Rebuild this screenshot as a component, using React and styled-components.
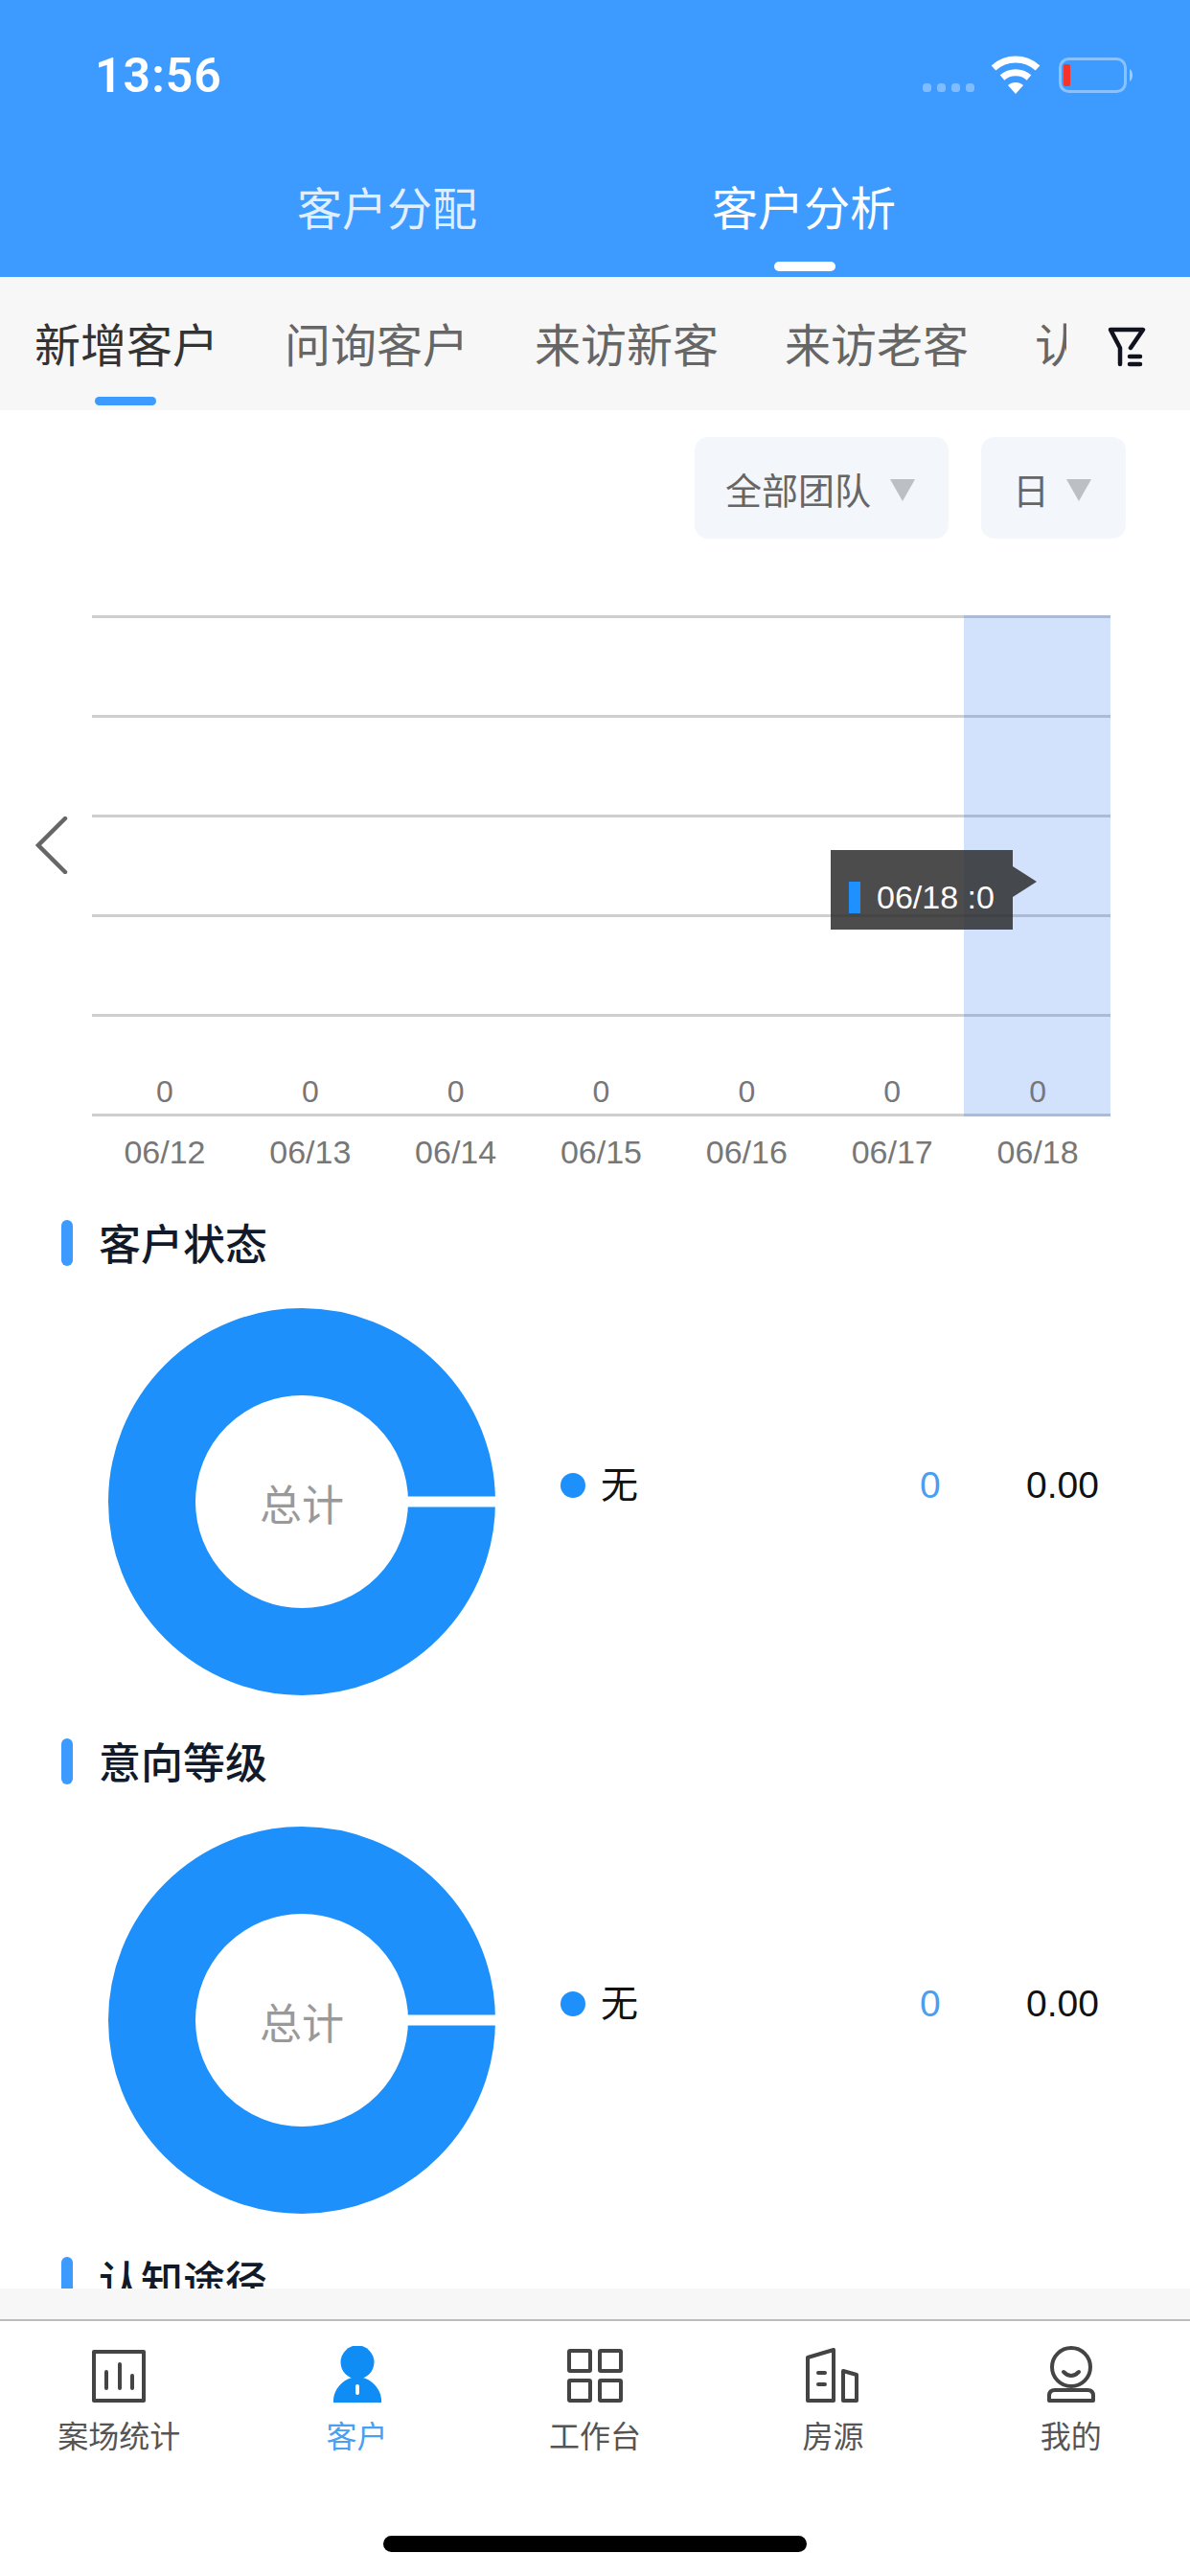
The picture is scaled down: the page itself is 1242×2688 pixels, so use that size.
import React from 'react';
import styled, { createGlobalStyle } from 'styled-components';

const days = ['06/12', '06/13', '06/14', '06/15', '06/16', '06/17', '06/18'];
const subTabs = ['新增客户', '问询客户', '来访新客', '来访老客', '认知客户'];

const GlobalStyle = createGlobalStyle`
  html, body {
    margin: 0;
    padding: 0;
    background: #fff;
  }
  body {
    font-family: "Liberation Sans", "Noto Sans CJK SC", sans-serif;
  }
`;

const Phone = styled.div`
  width: 1242px;
  height: 2688px;
  display: flex;
  flex-direction: column;
  overflow: hidden;
  background: #fff;
`;

const Header = styled.header`
  height: 289px;
  flex: none;
  background: #3d9aff;
  display: flex;
  flex-direction: column;
  color: #fff;
`;

const StatusBar = styled.div`
  height: 189px;
  flex: none;
  box-sizing: border-box;
  padding: 50px 59px 0 99px;
  display: flex;
  align-items: flex-start;
  justify-content: space-between;
`;

const Clock = styled.div`
  font-family: Roboto, "Liberation Sans", sans-serif;
  font-size: 50px;
  line-height: 58px;
  font-weight: 600;
  letter-spacing: 1px;
`;

const StatusIcons = styled.div`
  display: flex;
  align-items: flex-start;
  margin-top: 8px;
`;

const SignalSvg = styled.svg`
  margin-top: 23px;
`;

const BatterySvg = styled.svg`
  margin: 2px 0 0 19px;
`;

const TopTabs = styled.nav`
  display: flex;
  padding-left: 310px;
  gap: 241px;
`;

const TopTab = styled.div`
  position: relative;
  width: 192px;
  height: 100px;
  font-size: ${p => (p.$active ? '48px' : '47px')};
  line-height: 60px;
  white-space: nowrap;
  color: ${p => (p.$active ? '#fff' : 'rgba(255,255,255,.85)')};
  ${p => p.$active && `
    &::after {
      content: '';
      position: absolute;
      left: 65px;
      bottom: 6px;
      width: 64px;
      height: 10px;
      border-radius: 5px;
      background: #fff;
    }
  `}
`;

const SubBar = styled.div`
  height: 139px;
  flex: none;
  background: #f7f7f7;
  display: flex;
  align-items: flex-start;
`;

const SubTabs = styled.div`
  width: 1113px;
  flex: none;
  overflow: hidden;
  display: flex;
  gap: 69px;
  padding-left: 36px;
  box-sizing: border-box;
`;

const SubTab = styled.div`
  position: relative;
  flex: none;
  width: 192px;
  height: 139px;
  box-sizing: border-box;
  padding-top: 43px;
  font-size: 48px;
  line-height: 60px;
  white-space: nowrap;
  color: ${p => (p.$active ? '#333' : '#666')};
  ${p => p.$active && `
    &::after {
      content: '';
      position: absolute;
      left: 63px;
      top: 125px;
      width: 64px;
      height: 9px;
      border-radius: 5px;
      background: #3d9aff;
    }
  `}
`;

const FilterButton = styled.div`
  margin: 52px 0 0 43px;
  line-height: 0;
`;

const Content = styled.main`
  flex: 1;
  min-height: 0;
  overflow: hidden;
  background: #fff;
`;

const Filters = styled.div`
  display: flex;
  justify-content: flex-end;
  gap: 34px;
  padding: 28px 67px 0 0;
`;

const Select = styled.div`
  height: 106px;
  box-sizing: border-box;
  padding: 0 ${p => (p.$short ? '36px' : '35px')} 0 ${p => (p.$short ? '33px' : '32px')};
  display: flex;
  align-items: center;
  gap: ${p => (p.$short ? '18px' : '20px')};
  border-radius: 14px;
  background: #f3f6fb;
  color: #666;
  font-size: 38px;
`;

const Caret = styled.span`
  width: 0;
  height: 0;
  border-left: 13px solid transparent;
  border-right: 13px solid transparent;
  border-top: 23px solid #bcbfc4;
  margin-top: 4px;
`;

const ChartRow = styled.div`
  display: flex;
  align-items: flex-start;
  padding: 80px 83px 7px 37px;
`;

const PrevButton = styled.div`
  width: 59px;
  flex: none;
  margin-top: 210px;
`;

const Chart = styled.div`
  flex: 1;
`;

const Plot = styled.div`
  position: relative;
  height: 523px;
  display: flex;
  flex-direction: column;
  justify-content: space-between;
`;

const GridLine = styled.div`
  height: 3px;
  background: #cfcfcf;
`;

const Highlight = styled.div`
  position: absolute;
  top: 0;
  bottom: 0;
  right: 0;
  width: 153px;
  background: rgba(30, 110, 240, 0.2);
`;

const ValueRow = styled.div`
  position: absolute;
  left: 0;
  right: 0;
  bottom: 8px;
  display: grid;
  grid-template-columns: repeat(7, 1fr);
  text-align: center;
  font-size: 32px;
  line-height: 36px;
  color: #777;
`;

const AxisRow = styled.div`
  display: grid;
  grid-template-columns: repeat(7, 1fr);
  text-align: center;
  font-size: 34px;
  line-height: 38px;
  color: #777;
  padding-top: 18px;
`;

const Tooltip = styled.div`
  position: absolute;
  left: 771px;
  top: 245px;
  width: 190px;
  height: 83px;
  box-sizing: border-box;
  padding-left: 19px;
  display: flex;
  align-items: center;
  gap: 17px;
  background: rgba(45, 45, 45, 0.85);
  color: #fff;
  font-size: 34px;
  white-space: nowrap;
  &::after {
    content: '';
    position: absolute;
    left: 100%;
    top: 17px;
    border-left: 25px solid rgba(45, 45, 45, 0.85);
    border-top: 16px solid transparent;
    border-bottom: 16px solid transparent;
  }
`;

const TooltipMark = styled.span`
  width: 12px;
  height: 33px;
  margin-top: 16px;
  flex: none;
  background: #1e90ff;
`;

const TooltipText = styled.span`
  margin-top: 16px;
`;

const Section = styled.section`
  margin-top: 45px;
  padding-left: 64px;
`;

const SectionTitle = styled.h2`
  margin: 0;
  display: flex;
  align-items: flex-start;
  gap: 27px;
  height: 48px;
  font-size: 44px;
  line-height: 54px;
  font-weight: 500;
  color: #111a2a;
  white-space: nowrap;
  &::before {
    content: '';
    width: 12px;
    height: 48px;
    border-radius: 6px;
    background: #3d9aff;
  }
`;

const PieRow = styled.div`
  display: flex;
  align-items: center;
  padding: 44px 94px 0 49px;
`;

const Donut = styled.div`
  position: relative;
  width: 404px;
  height: 404px;
  flex: none;
`;

const DonutLabel = styled.div`
  position: absolute;
  inset: 0;
  display: flex;
  align-items: center;
  justify-content: center;
  padding-top: 2px;
  box-sizing: border-box;
  font-size: 44px;
  color: #999;
`;

const Legend = styled.div`
  flex: 1;
  margin: -34px 0 0 68px;
  display: flex;
  align-items: center;
  font-size: 39px;
  line-height: 44px;
`;

const Dot = styled.span`
  width: 26px;
  height: 26px;
  border-radius: 50%;
  background: #1e90fb;
  margin-right: 16px;
`;

const LegendName = styled.span`
  color: #111;
  width: 333px;
`;

const LegendCount = styled.span`
  color: #4a9ff0;
  width: 111px;
`;

const LegendPercent = styled.span`
  color: #111;
`;

const FooterGap = styled.div`
  height: 32px;
  flex: none;
  background: #f7f7f7;
  border-bottom: 2px solid #bbb;
`;

const TabBar = styled.nav`
  height: 266px;
  flex: none;
  position: relative;
  display: grid;
  grid-template-columns: repeat(5, 1fr);
  background: #fff;
`;

const TabItem = styled.div`
  display: flex;
  flex-direction: column;
  align-items: center;
  padding-top: 26px;
  font-size: 32px;
  line-height: 40px;
  color: ${p => (p.$active ? '#4a9ff0' : '#555')};
  svg {
    margin-bottom: 15px;
  }
`;

const HomeIndicator = styled.div`
  position: absolute;
  left: 400px;
  top: 224px;
  width: 442px;
  height: 17px;
  border-radius: 9px;
  background: #000;
`;

const SignalDots = () => (
  <SignalSvg width="71" height="20" viewBox="0 0 71 20">
    <g fill="#fff" fillOpacity=".35">
      <rect x="0" y="6" width="9" height="9" rx="3.5" />
      <rect x="15" y="6" width="9" height="9" rx="3.5" />
      <rect x="30" y="6" width="9" height="9" rx="3.5" />
      <rect x="45" y="6" width="9" height="9" rx="3.5" />
    </g>
  </SignalSvg>
);

const Wifi = () => (
  <svg width="52" height="40" viewBox="0 0 52 40">
    <g fill="none" stroke="#fff" strokeWidth="7">
      <path d="M3 13 C16 1 36 1 49 13" />
      <path d="M12 23 C20 16 32 16 40 23" />
    </g>
    <path d="M18 31 C22 27 30 27 34 31 L26 40 Z" fill="#fff" />
  </svg>
);

const Battery = () => (
  <BatterySvg width="78" height="38" viewBox="0 0 78 38">
    <rect x="1.5" y="1.5" width="68" height="34" rx="9" fill="none" stroke="#fff" strokeOpacity=".4" strokeWidth="3" />
    <rect x="5" y="7" width="7" height="23" rx="2" fill="#f4332a" />
    <path d="M74 12 C78 14 78 23 74 25 Z" fill="#fff" fillOpacity=".5" />
  </BatterySvg>
);

const Funnel = () => (
  <svg width="40" height="42" viewBox="0 0 40 42" fill="none" stroke="#10131f" strokeWidth="4.5" strokeLinecap="round" strokeLinejoin="round">
    <path d="M24 22 L37 3 H3 L13 22 V39" />
    <path d="M23 31 H34 M23 39 H34" />
  </svg>
);

const Chevron = () => (
  <svg width="34" height="60" viewBox="0 0 34 60" fill="none" stroke="#666" strokeWidth="4.5" strokeLinecap="round">
    <path d="M31 2 L3 30 L31 58" />
  </svg>
);

const DonutChart = () => (
  <svg width="404" height="404" viewBox="0 0 404 404">
    <circle cx="202" cy="202" r="156.5" fill="none" stroke="#1e90fb" strokeWidth="91" />
    <rect x="312" y="196.5" width="92" height="11" fill="#fff" />
  </svg>
);

const StatsIcon = ({ color }) => (
  <svg width="60" height="60" viewBox="0 0 60 60" fill="none" stroke={color} strokeWidth="4" strokeLinecap="round" strokeLinejoin="round">
    <rect x="4" y="6" width="52" height="51" />
    <path d="M17 27 V44 M31 19 V44 M44 31 V44" />
  </svg>
);

const PersonIcon = ({ color }) => (
  <svg width="60" height="60" viewBox="0 0 60 60">
    <circle cx="30" cy="17" r="17.5" fill={color} />
    <path d="M5 59 C4 46 15 33 30 32 C45 33 56 46 55 59 Z" fill={color} />
    <rect x="28" y="40" width="4" height="11" rx="2" fill="#fff" />
  </svg>
);

const GridIcon = ({ color }) => (
  <svg width="60" height="60" viewBox="0 0 60 60" fill="none" stroke={color} strokeWidth="4" strokeLinejoin="round">
    <rect x="3" y="5" width="22" height="21" rx="1" />
    <rect x="35" y="5" width="22" height="21" rx="1" />
    <rect x="3" y="36" width="22" height="21" rx="1" />
    <rect x="35" y="36" width="22" height="21" rx="1" />
  </svg>
);

const BuildingIcon = ({ color }) => (
  <svg width="60" height="60" viewBox="0 0 60 60" fill="none" stroke={color} strokeWidth="4" strokeLinejoin="round" strokeLinecap="round">
    <path d="M4 12 L31 4 V57 H4 Z" />
    <path d="M41 26 L55 30 V57 H41 Z" />
    <path d="M15 28 H22 M15 40 H22" />
  </svg>
);

const MeIcon = ({ color }) => (
  <svg width="60" height="60" viewBox="0 0 60 60" fill="none" stroke={color} strokeWidth="4" strokeLinecap="round" strokeLinejoin="round">
    <circle cx="30" cy="22" r="20" />
    <path d="M22 27 Q30 35 38 27" />
    <path d="M13 46 H47 Q53 46 53 52 V57 H7 V52 Q7 46 13 46 Z" />
  </svg>
);

const tabs = [
  { label: '案场统计', Icon: StatsIcon },
  { label: '客户', Icon: PersonIcon, active: true },
  { label: '工作台', Icon: GridIcon },
  { label: '房源', Icon: BuildingIcon },
  { label: '我的', Icon: MeIcon },
];

const PieSection = ({ title }) => (
  <Section>
    <SectionTitle>{title}</SectionTitle>
    <PieRow>
      <Donut>
        <DonutChart />
        <DonutLabel>总计</DonutLabel>
      </Donut>
      <Legend>
        <Dot />
        <LegendName>无</LegendName>
        <LegendCount>0</LegendCount>
        <LegendPercent>0.00</LegendPercent>
      </Legend>
    </PieRow>
  </Section>
);

const App = () => {
  return (
    <Phone>
      <GlobalStyle />
      <Header>
        <StatusBar>
          <Clock>13:56</Clock>
          <StatusIcons>
            <SignalDots />
            <Wifi />
            <Battery />
          </StatusIcons>
        </StatusBar>
        <TopTabs>
          <TopTab>客户分配</TopTab>
          <TopTab $active>客户分析</TopTab>
        </TopTabs>
      </Header>
      <SubBar>
        <SubTabs>
          {subTabs.map((t, i) => (
            <SubTab key={t} $active={i === 0}>{t}</SubTab>
          ))}
        </SubTabs>
        <FilterButton>
          <Funnel />
        </FilterButton>
      </SubBar>
      <Content>
        <Filters>
          <Select>
            全部团队
            <Caret />
          </Select>
          <Select $short>
            日
            <Caret />
          </Select>
        </Filters>
        <ChartRow>
          <PrevButton>
            <Chevron />
          </PrevButton>
          <Chart>
            <Plot>
              <GridLine />
              <GridLine />
              <GridLine />
              <GridLine />
              <GridLine />
              <GridLine />
              <Highlight />
              <ValueRow>
                {days.map(d => (
                  <span key={d}>0</span>
                ))}
              </ValueRow>
              <Tooltip>
                <TooltipMark />
                <TooltipText>06/18 :0</TooltipText>
              </Tooltip>
            </Plot>
            <AxisRow>
              {days.map(d => (
                <span key={d}>{d}</span>
              ))}
            </AxisRow>
          </Chart>
        </ChartRow>
        <PieSection title="客户状态" />
        <PieSection title="意向等级" />
        <Section>
          <SectionTitle>认知途径</SectionTitle>
        </Section>
      </Content>
      <FooterGap />
      <TabBar>
        {tabs.map(({ label, Icon, active }) => (
          <TabItem key={label} $active={active}>
            <Icon color={active ? '#0f8df5' : '#444'} />
            {label}
          </TabItem>
        ))}
        <HomeIndicator />
      </TabBar>
    </Phone>
  );
};

export default App;
